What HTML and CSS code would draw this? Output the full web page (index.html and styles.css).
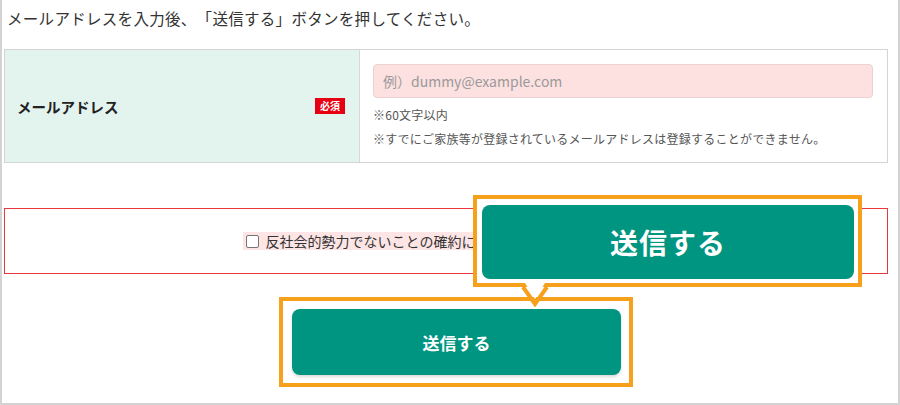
FILE: index.html
```html
<!DOCTYPE html>
<html lang="ja">
<head>
<meta charset="utf-8">
<link rel="stylesheet" href="styles.css">
</head>
<body>
<div class="frame">
  <p class="lead">メールアドレスを入力後、「送信する」ボタンを押してください。</p>
  <div class="form-table">
    <div class="th">
      <span class="th-label">メールアドレス</span>
      <span class="badge">必須</span>
    </div>
    <div class="td">
      <div class="input">例）dummy@example.com</div>
      <div class="notes">
        <div>※60文字以内</div>
        <div>※すでにご家族等が登録されているメールアドレスは登録することができません。</div>
      </div>
    </div>
  </div>
  <div class="agree-box">
    <label class="agree"><span class="checkbox"></span>反社会的勢力でないことの確約に関する事項に同意します</label>
  </div>
  <div class="highlight">
    <div class="btn">送信する</div>
  </div>

  <div class="callout">
    <div class="callout-btn">送信する</div>
  </div>
  <svg class="tail" width="32" height="24" viewBox="0 0 32 24">
    <polygon points="6,0 26,0 16,16" fill="#ffffff"/>
    <polyline points="4,4 16,21 28,4" fill="none" stroke="#f7a01c" stroke-width="4" stroke-linejoin="miter"/>
  </svg>
</div>
</body>
</html>
```

FILE: styles.css
```css
* { box-sizing: border-box; }
html, body { margin: 0; padding: 0; background: #fff; }
body {
  font-family: "Noto Sans CJK JP", "Noto Sans", sans-serif;
  color: #333;
  text-spacing-trim: space-all;
}
.frame {
  position: relative;
  width: 900px;
  height: 405px;
  border: 2px solid #d3d3d3;
  border-top: none;
  padding: 0 10px 0 2px;
  overflow: hidden;
}
.lead {
  margin: 0;
  padding: 7px 0 0 3px;
  font-size: 15.5px;
  letter-spacing: 0.3px;
  line-height: 22px;
  color: #333;
}
.form-table {
  margin-top: 20px;
  display: flex;
  width: 884px;
  border: 1px solid #d4d4d4;
}
.th {
  width: 355px;
  background: #e3f4ef;
  border-right: 1px solid #d8d8d8;
  display: flex;
  align-items: center;
  justify-content: space-between;
  padding: 0 14px 0 12px;
}
.th-label {
  font-weight: bold;
  font-size: 14.5px;
  color: #222;
}
.badge {
  background: #e60012;
  color: #fff;
  font-weight: bold;
  font-size: 10px;
  line-height: 16px;
  padding: 0 5px;
}
.td {
  flex: 1;
  padding: 14px 14px 11px 13px;
}
.input {
  height: 34px;
  background: #fde0e0;
  border: 1px solid #ecd0d2;
  border-radius: 4px;
  padding-left: 9px;
  font-size: 14px;
  line-height: 32px;
  color: #9a9a9a;
}
.notes {
  margin-top: 5px;
  font-size: 12px;
  line-height: 24px;
  color: #555;
  letter-spacing: 0.25px;
}
.agree-box {
  margin-top: 45px;
  width: 884px;
  height: 66px;
  border: 1px solid #e8383d;
  display: flex;
  align-items: center;
  justify-content: center;
}
.agree {
  display: flex;
  align-items: center;
  background: #fde5e5;
  font-size: 14px;
  line-height: 18px;
  color: #333;
  padding-right: 2px;
  margin-left: -18px;
}
.checkbox {
  width: 13px;
  height: 13px;
  border: 1px solid #767676;
  border-radius: 2px;
  background: #fff;
  margin: 0 7px 0 3px;
}
.highlight {
  margin-top: 23px;
  margin-left: 275px;
  width: 354px;
  border: 4px solid #f7a01c;
  padding: 8px 8px 8px 9px;
}
.btn {
  height: 66px;
  background: #009580;
  border-radius: 8px;
  box-shadow: 0 2px 3px rgba(0,0,0,0.15);
  color: #fff;
  font-weight: bold;
  font-size: 17px;
  display: flex;
  align-items: center;
  justify-content: center;
}
.callout {
  position: absolute;
  left: 471px;
  top: 195px;
  width: 389px;
  height: 92px;
  border: 4px solid #f7a01c;
  background: #fff;
  padding: 6px 4px 4px 5px;
}
.callout-btn {
  height: 100%;
  background: #009580;
  border-radius: 8px;
  color: #fff;
  font-weight: bold;
  font-size: 28px;
  letter-spacing: 1px;
  display: flex;
  align-items: center;
  justify-content: center;
}
.tail {
  position: absolute;
  left: 517px;
  top: 283px;
}
```
